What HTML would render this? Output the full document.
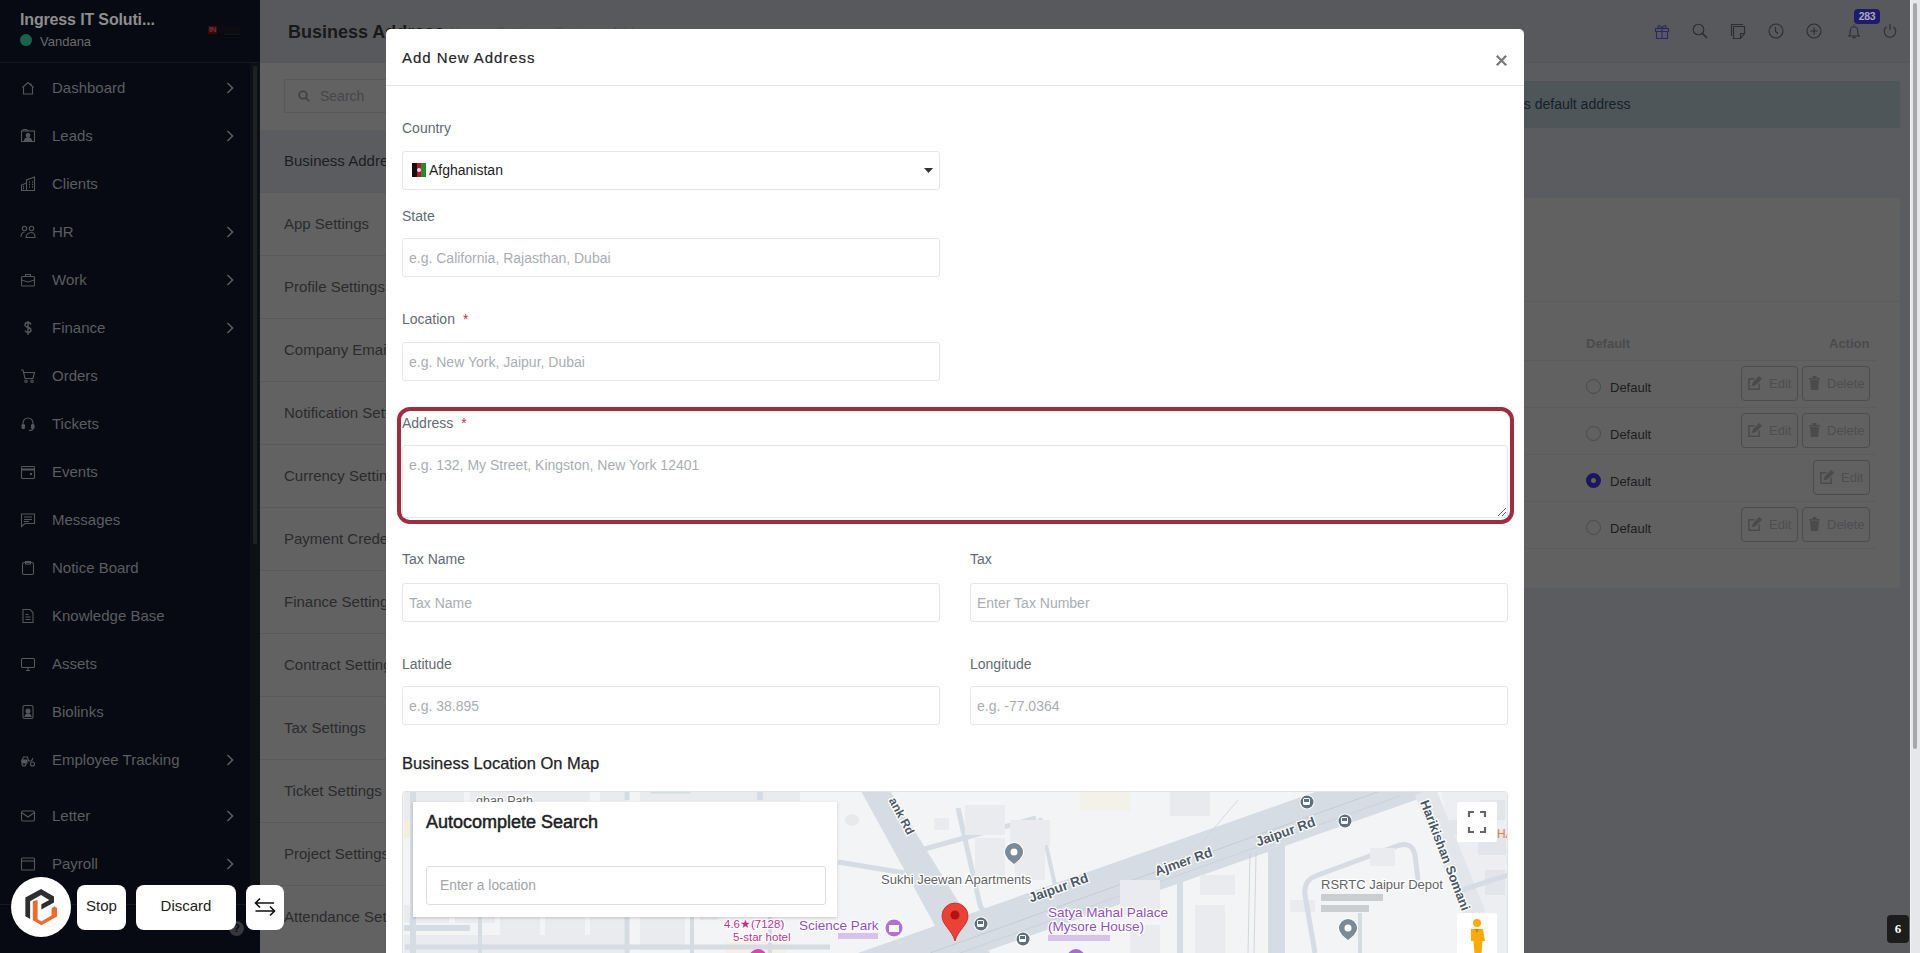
<!DOCTYPE html>
<html><head><meta charset="utf-8">
<style>
*{box-sizing:border-box;margin:0;padding:0}
html,body{width:1920px;height:953px;overflow:hidden;font-family:"Liberation Sans",sans-serif;background:#5b5c60;position:relative}
.abs{position:absolute}
#sb{position:absolute;left:0;top:0;width:260px;height:953px;background:#070a12;overflow:hidden}
#sb .hd{position:absolute;left:0;top:0;width:260px;height:63px;border-bottom:1px solid #15181e}
.mi{position:absolute;left:0;width:250px;height:48px;line-height:48px;font-size:15px;color:#5b5d61;white-space:nowrap}
.mi span{position:absolute;left:52px;top:0}
.mi svg.ic{position:absolute;left:20px;top:16px;width:16px;height:16px;fill:none;stroke:#55575b;stroke-width:1.1}
.mi svg.ch{position:absolute;left:226px;top:18px;width:8px;height:12px;fill:none;stroke:#5b5d61;stroke-width:1.6}
#main{position:absolute;left:260px;top:0;width:1650px;height:953px;background:#5b5c60;overflow:hidden}
#top{position:absolute;left:0;top:0;width:1650px;height:63px;background:#58595d;border-bottom:1px solid #55565a}
.smi{position:absolute;left:0;width:300px;height:63px;line-height:62px;font-size:15px;color:#2b2b2c;padding-left:24px;border-bottom:1px solid #5a5a5b;white-space:nowrap}
.hic{position:absolute;top:23px;width:16px;height:16px;fill:none;stroke:#2e2f33;stroke-width:1.1}
#modal{position:absolute;left:386px;top:29px;width:1138px;height:940px;background:#fff;border-radius:5px;overflow:hidden}
.lbl{position:absolute;font-size:14px;color:#636a73;white-space:nowrap;line-height:16px}
.inp{position:absolute;height:38px;border:1px solid #e4e6eb;border-radius:3px;background:#fff;font-size:14px;color:#a9adb3;line-height:38px;padding-left:6px;white-space:nowrap}
.req{color:#d52a3e;margin-left:8px}
.btn{position:absolute;height:35px;border:1px solid #4b4c4e;border-radius:4px;font-size:13px;color:#4d4e50;line-height:33px;white-space:nowrap}
.radio{position:absolute;left:1326px;width:15px;height:15px;border-radius:50%;border:1px solid #4a4b4d}
.dl{position:absolute;left:1350px;font-size:13px;color:#1d1d1e;line-height:15px}
.fb{position:absolute;top:885px;height:45px;background:#fff;border-radius:8px;font-size:15px;color:#222;line-height:42px;text-align:center}
</style></head><body>
<div id="sb">
<div class="hd">
<div class="abs" style="left:20px;top:11px;font-size:16px;font-weight:700;color:#8e8e8e;letter-spacing:-0.15px;line-height:18px">Ingress IT Soluti...</div>
<div class="abs" style="left:20px;top:34px;width:12px;height:12px;border-radius:50%;background:#14654f"></div>
<div class="abs" style="left:40px;top:34px;font-size:13px;color:#6a6b6d;line-height:15px">Vandana</div>
<div class="abs" style="left:208px;top:26px;width:9px;height:8px;background:#3a070a;color:#7a3030;font-size:8px;font-weight:700;line-height:8px;letter-spacing:-0.5px;padding-left:1px">IN</div>
<div class="abs" style="left:218px;top:26px;width:22px;height:7px;background:#0b0c12"></div>
<div class="abs" style="left:224px;top:34px;width:16px;height:1px;background:#101119"></div>
</div>
<div class="abs" style="left:250px;top:63px;width:10px;height:841px;background:#0d1015"></div>
<div class="abs" style="left:253px;top:66px;width:4px;height:478px;border-radius:1px;background:#1f2024"></div>
<div class="mi" style="top:64px"><svg class="ic" viewBox="0 0 16 16"><path d="M2.5 7.5L8 2.5l5.5 5"/><path d="M3.5 6.5V14h9V6.5"/><path d="M11 3.5v2"/></svg><span>Dashboard</span><svg class="ch" viewBox="0 0 8 12"><path d="M1.5 1l5 5-5 5"/></svg></div>
<div class="mi" style="top:112px"><svg class="ic" viewBox="0 0 16 16"><rect x="1.5" y="3" width="13" height="10.5"/><path d="M1.5 3l2-1.5h3L8 3"/><circle cx="8" cy="7.3" r="1.8" fill="#55575b"/><path d="M4.5 12.5c.5-2 2-2.8 3.5-2.8s3 .8 3.5 2.8z" fill="#55575b"/></svg><span>Leads</span><svg class="ch" viewBox="0 0 8 12"><path d="M1.5 1l5 5-5 5"/></svg></div>
<div class="mi" style="top:160px"><svg class="ic" viewBox="0 0 16 16"><path d="M1.5 14.5V9l5-2v7.5M6.5 14.5V4l8-3v13.5M1 14.5h14"/><path d="M3 10.5h1M3 12.5h1M9 6h1M12 6h1M9 8.5h1M12 8.5h1M9 11h1M12 11h1" stroke-width="1.3"/></svg><span>Clients</span></div>
<div class="mi" style="top:208px"><svg class="ic" viewBox="0 0 16 16"><circle cx="4.5" cy="4.5" r="2.2"/><circle cx="11.5" cy="4.5" r="2.2"/><path d="M1 13c0-3 1.5-5 3.5-5M6 13.5c0-3 2.5-5 5.5-5s3.5 2 3.5 5z"/></svg><span>HR</span><svg class="ch" viewBox="0 0 8 12"><path d="M1.5 1l5 5-5 5"/></svg></div>
<div class="mi" style="top:256px"><svg class="ic" viewBox="0 0 16 16"><rect x="1.5" y="4.5" width="13" height="9.5" rx="1"/><path d="M5.5 4.5v-2h5v2M1.5 8l6.5 2 6.5-2"/></svg><span>Work</span><svg class="ch" viewBox="0 0 8 12"><path d="M1.5 1l5 5-5 5"/></svg></div>
<div class="mi" style="top:304px"><svg class="ic" viewBox="0 0 16 16"><path d="M11 4.5c-.5-1.2-1.7-2-3-2-1.7 0-3 1-3 2.5s1.3 2 3 2.5 3 1 3 2.5-1.3 2.5-3 2.5c-1.4 0-2.6-.8-3-2M8 1v14" stroke-width="1.4"/></svg><span>Finance</span><svg class="ch" viewBox="0 0 8 12"><path d="M1.5 1l5 5-5 5"/></svg></div>
<div class="mi" style="top:352px"><svg class="ic" viewBox="0 0 16 16"><path d="M1 2h2l2 8.5h8l1.5-6H4"/><circle cx="6" cy="13.2" r="1.2"/><circle cx="12" cy="13.2" r="1.2"/></svg><span>Orders</span></div>
<div class="mi" style="top:400px"><svg class="ic" viewBox="0 0 16 16"><path d="M3 9V7a5 5 0 0 1 10 0v2"/><rect x="2" y="8.5" width="2.5" height="4" rx="1" fill="#55575b"/><rect x="11.5" y="8.5" width="2.5" height="4" rx="1" fill="#55575b"/><path d="M13 12.5c0 1.5-2 2-4 2"/></svg><span>Tickets</span></div>
<div class="mi" style="top:448px"><svg class="ic" viewBox="0 0 16 16"><rect x="1.5" y="2.5" width="13" height="12" rx="1"/><path d="M1.5 5.5h13" stroke-width="2"/><rect x="10" y="9" width="2" height="2" fill="#55575b" stroke="none"/></svg><span>Events</span></div>
<div class="mi" style="top:496px"><svg class="ic" viewBox="0 0 16 16"><path d="M1.5 2h13v9.5H5L1.5 14.5z"/><path d="M4 5h8M4 7.5h8M4 9.5h5"/></svg><span>Messages</span></div>
<div class="mi" style="top:544px"><svg class="ic" viewBox="0 0 16 16"><rect x="2.5" y="2.5" width="11" height="12" rx="1.5"/><path d="M5.5 1.5h5v2.5h-5z"/></svg><span>Notice Board</span></div>
<div class="mi" style="top:592px"><svg class="ic" viewBox="0 0 16 16"><path d="M3 1.5h7l3 3v10H3z"/><path d="M5.5 6.5h3M5.5 9h5M5.5 11.5h5"/></svg><span>Knowledge Base</span></div>
<div class="mi" style="top:640px"><svg class="ic" viewBox="0 0 16 16"><rect x="1.5" y="2.5" width="13" height="9" rx="1"/><path d="M6 14.5h4M8 11.5v3"/></svg><span>Assets</span></div>
<div class="mi" style="top:688px"><svg class="ic" viewBox="0 0 16 16"><rect x="3" y="1.5" width="10" height="13" rx="1.5"/><circle cx="8" cy="7" r="2" fill="#55575b"/><path d="M5 12.5c.5-2 1.5-2.5 3-2.5s2.5.5 3 2.5z" fill="#55575b"/></svg><span>Biolinks</span></div>
<div class="mi" style="top:736px"><svg class="ic" viewBox="0 0 16 16"><circle cx="4" cy="12" r="2"/><circle cx="12.5" cy="12" r="2"/><path d="M1.5 10l2-5h4l1 4h3l1.5-3" /><path d="M2 8h5v3H2z" fill="#55575b"/></svg><span>Employee Tracking</span><svg class="ch" viewBox="0 0 8 12"><path d="M1.5 1l5 5-5 5"/></svg></div>
<div class="mi" style="top:792px"><svg class="ic" viewBox="0 0 16 16"><rect x="1.5" y="3" width="13" height="10" rx="1.5"/><path d="M1.5 4.5L8 9l6.5-4.5"/></svg><span>Letter</span><svg class="ch" viewBox="0 0 8 12"><path d="M1.5 1l5 5-5 5"/></svg></div>
<div class="mi" style="top:840px"><svg class="ic" viewBox="0 0 16 16"><rect x="1.5" y="2" width="13" height="12" rx="1"/><path d="M1.5 5h13"/></svg><span>Payroll</span><svg class="ch" viewBox="0 0 8 12"><path d="M1.5 1l5 5-5 5"/></svg></div>
<div class="abs" style="left:0;top:904px;width:250px;height:1px;background:#15181e"></div>
<svg class="abs" style="left:17px;top:920px;width:8px;height:12px" viewBox="0 0 8 12" fill="none" stroke="#3c3e42" stroke-width="1.6"><path d="M6.5 1l-5 5 5 5"/></svg>
<div class="abs" style="left:229px;top:921px;width:15px;height:15px;border-radius:50%;background:#35373b;color:#070a11;font-size:11px;font-weight:700;text-align:center;line-height:15px">?</div>
</div>
<div id="main">
<div id="top">
<div class="abs" style="left:28px;top:22px;font-size:18px;font-weight:700;color:#19191a;line-height:21px;white-space:nowrap">Business Address</div>
<div class="abs" style="left:190px;top:24px;font-size:13px;color:#4e4f53;line-height:15px;white-space:nowrap">Home &bull; Settings &bull; Business Address</div>
<svg class="hic" style="left:1394px;stroke:#2a2766" viewBox="0 0 16 16"><path d="M1.5 5.5h13v3h-13zM2.5 8.5v7h11v-7M8 5.5v10"/><path d="M8 5.5C6.5 2 3.5 1.5 4 4.2 4.3 5.3 6.5 5.5 8 5.5zM8 5.5c1.5-3.5 4.5-4 4-1.3-.3 1.1-2.5 1.3-4 1.3z"/></svg>
<svg class="hic" style="left:1432px;stroke:#2c2d31" viewBox="0 0 16 16"><circle cx="6.5" cy="6.5" r="5.3"/><path d="M10.4 10.4L15 15" stroke-width="1.6"/></svg>
<svg class="hic" style="left:1470px;stroke:#2c2d31" viewBox="0 0 16 16"><path d="M3.5 3.5h11v7l-4 5h-7z"/><path d="M1.5 13V1.5H13M10.5 15.5v-5h4"/></svg>
<svg class="hic" style="left:1508px;stroke:#2c2d31" viewBox="0 0 16 16"><circle cx="8" cy="8" r="7"/><path d="M7.5 4v4.5l2.5 2"/></svg>
<svg class="hic" style="left:1546px;stroke:#2c2d31" viewBox="0 0 16 16"><circle cx="8" cy="8" r="7"/><path d="M8 4.5v7M4.5 8h7"/></svg>
<svg class="hic" style="left:1586px;stroke:#2c2d31" viewBox="0 0 16 16"><path d="M2 13h12M3.3 13c1-1.5 1-3 1-5.5a3.7 3.7 0 0 1 7.4 0c0 2.5 0 4 1 5.5M6.5 14.6h3"/><path d="M8 1.5v1"/></svg>
<svg class="hic" style="left:1622px;stroke:#2c2d31" viewBox="0 0 16 16"><path d="M8 1v6"/><path d="M4.5 3.8a5.8 5.8 0 1 0 7 0"/></svg>
<div class="abs" style="left:1594px;top:9px;width:26px;height:15px;border-radius:4px;background:#1e1b6c;color:#a9a8c0;font-size:10.5px;font-weight:700;text-align:center;line-height:15px;letter-spacing:-0.3px">283</div>
</div>
<div class="abs" style="left:0;top:63px;width:300px;height:890px;background:#626263"></div>
<div class="abs" style="left:24px;top:79px;width:260px;height:34px;border:1px solid #59595a;border-radius:1px"></div>
<svg class="abs" style="left:38px;top:90px;width:12px;height:12px" viewBox="0 0 12 12" fill="none" stroke="#3e3f41" stroke-width="1.6"><circle cx="5" cy="5" r="3.8"/><path d="M8 8l3.2 3.2"/></svg>
<div class="abs" style="left:60px;top:88px;font-size:14px;color:#454649;line-height:16px">Search</div>
<div class="smi" style="top:130px;background:#5b5c60;color:#1b1d22;">Business Address</div>
<div class="smi" style="top:193px;">App Settings</div>
<div class="smi" style="top:256px;">Profile Settings</div>
<div class="smi" style="top:319px;">Company Email</div>
<div class="smi" style="top:382px;">Notification Settings</div>
<div class="smi" style="top:445px;">Currency Settings</div>
<div class="smi" style="top:508px;">Payment Credentials</div>
<div class="smi" style="top:571px;">Finance Settings</div>
<div class="smi" style="top:634px;">Contract Settings</div>
<div class="smi" style="top:697px;">Tax Settings</div>
<div class="smi" style="top:760px;">Ticket Settings</div>
<div class="smi" style="top:823px;">Project Settings</div>
<div class="smi" style="top:886px;border-bottom:none;">Attendance Settings</div>
<div class="abs" style="left:310px;top:81px;width:1330px;height:47px;background:#4f5659;border-radius:3px"></div>
<div class="abs" style="left:1063px;top:96px;font-size:14px;color:#13212a;line-height:16px;white-space:nowrap">Click on the radio button to set as default address</div>
<div class="abs" style="left:310px;top:198px;width:1330px;height:390px;background:#616162;border-radius:3px"></div>
<div class="abs" style="left:310px;top:301px;width:1330px;height:1px;background:#5b5b5c"></div>
<div class="abs" style="left:1326px;top:336px;font-size:13px;font-weight:700;color:#4a4b4d;line-height:15px">Default</div>
<div class="abs" style="left:1569px;top:336px;font-size:13px;font-weight:700;color:#4a4b4d;line-height:15px">Action</div>
<div class="abs" style="left:330px;top:360px;width:1286px;height:1px;background:#5b5b5c"></div>
<div class="abs" style="left:330px;top:407px;width:1286px;height:1px;background:#5b5b5c"></div>
<div class="abs" style="left:330px;top:454px;width:1286px;height:1px;background:#5b5b5c"></div>
<div class="abs" style="left:330px;top:501px;width:1286px;height:1px;background:#5b5b5c"></div>
<div class="abs" style="left:330px;top:548px;width:1286px;height:1px;background:#5b5b5c"></div>
<div class="radio" style="top:379px;"></div>
<div class="dl" style="top:380px">Default</div>
<div class="btn" style="left:1481px;top:366px;width:57px"><svg style="position:absolute;left:5px;top:9px;width:15px;height:15px" viewBox="0 0 16 16" fill="none" stroke="#4a4b4d" stroke-width="1.6"><path d="M8 3H2v11h11V8"/><path d="M6 10l1-3 6-6 2 2-6 6z" fill="#4a4b4d"/></svg><span style="position:absolute;left:27px">Edit</span></div>
<div class="btn" style="left:1542px;top:366px;width:68px"><svg style="position:absolute;left:6px;top:9px;width:11px;height:14px" viewBox="0 0 11 14"><path d="M0 2h11v1.5H0zM3.5 0h4v2h-4zM1 4h9l-.8 10H1.8z" fill="#4a4b4d"/></svg><span style="position:absolute;left:24px">Delete</span></div>
<div class="radio" style="top:426px;"></div>
<div class="dl" style="top:427px">Default</div>
<div class="btn" style="left:1481px;top:413px;width:57px"><svg style="position:absolute;left:5px;top:9px;width:15px;height:15px" viewBox="0 0 16 16" fill="none" stroke="#4a4b4d" stroke-width="1.6"><path d="M8 3H2v11h11V8"/><path d="M6 10l1-3 6-6 2 2-6 6z" fill="#4a4b4d"/></svg><span style="position:absolute;left:27px">Edit</span></div>
<div class="btn" style="left:1542px;top:413px;width:68px"><svg style="position:absolute;left:6px;top:9px;width:11px;height:14px" viewBox="0 0 11 14"><path d="M0 2h11v1.5H0zM3.5 0h4v2h-4zM1 4h9l-.8 10H1.8z" fill="#4a4b4d"/></svg><span style="position:absolute;left:24px">Delete</span></div>
<div class="radio" style="top:473px;background:#1a175f;border:4px solid #1a175f;"></div>
<div class="abs" style="left:1331px;top:478px;width:5px;height:5px;border-radius:50%;background:#636363"></div>
<div class="dl" style="top:474px">Default</div>
<div class="btn" style="left:1553px;top:460px;width:57px"><svg style="position:absolute;left:5px;top:9px;width:15px;height:15px" viewBox="0 0 16 16" fill="none" stroke="#4a4b4d" stroke-width="1.6"><path d="M8 3H2v11h11V8"/><path d="M6 10l1-3 6-6 2 2-6 6z" fill="#4a4b4d"/></svg><span style="position:absolute;left:27px">Edit</span></div>
<div class="radio" style="top:520px;"></div>
<div class="dl" style="top:521px">Default</div>
<div class="btn" style="left:1481px;top:507px;width:57px"><svg style="position:absolute;left:5px;top:9px;width:15px;height:15px" viewBox="0 0 16 16" fill="none" stroke="#4a4b4d" stroke-width="1.6"><path d="M8 3H2v11h11V8"/><path d="M6 10l1-3 6-6 2 2-6 6z" fill="#4a4b4d"/></svg><span style="position:absolute;left:27px">Edit</span></div>
<div class="btn" style="left:1542px;top:507px;width:68px"><svg style="position:absolute;left:6px;top:9px;width:11px;height:14px" viewBox="0 0 11 14"><path d="M0 2h11v1.5H0zM3.5 0h4v2h-4zM1 4h9l-.8 10H1.8z" fill="#4a4b4d"/></svg><span style="position:absolute;left:24px">Delete</span></div>
</div>
<div class="abs" style="left:1910px;top:0;width:10px;height:953px;background:#e5e7eb;border-left:1px solid #f3f4f6"></div>
<div class="abs" style="left:1913px;top:3px;width:4px;height:746px;border-radius:2px;background:#a6a7a9"></div>
<div id="modal">
<div class="abs" style="left:16.0px;top:19.8px;font-size:15px;line-height:18px;white-space:nowrap;color:#25262a;letter-spacing:0.95px;-webkit-text-stroke:0.2px #25262a">Add New Address</div>
<svg class="abs" style="left:1109px;top:25px;width:13px;height:13px" viewBox="0 0 13 13" stroke="#787879" stroke-width="2.3"><path d="M1.8 1.8l9.4 9.4M11.2 1.8l-9.4 9.4"/></svg>
<div class="abs" style="left:0;top:56px;width:1138px;height:1px;background:#e3e4e6"></div>
<div class="abs" style="left:16.0px;top:90.5px;font-size:14px;line-height:17px;white-space:nowrap;color:#636a73">Country</div>
<div class="inp" style="left:16px;top:122px;width:538px;height:39px;color:#212225;padding-left:0"><div class="abs" style="left:9px;top:11px;width:14px;height:14px;background:linear-gradient(90deg,#111 0 33%,#c8102e 33% 66%,#1e8f2a 66%)"></div><div class="abs" style="left:14px;top:16px;width:4px;height:4px;border-radius:50%;background:#f3d5d5"></div><span class="abs" style="left:26px;top:0;line-height:37px">Afghanistan</span><svg class="abs" style="left:521px;top:16px;width:9px;height:5px" viewBox="0 0 9 5"><path d="M0 0h9L4.5 5z" fill="#333"/></svg></div>
<div class="abs" style="left:16.0px;top:178.9px;font-size:14px;line-height:17px;white-space:nowrap;color:#636a73">State</div>
<div class="inp" style="left:16px;top:209px;width:538px;height:39px;">e.g. California, Rajasthan, Dubai</div>
<div class="abs" style="left:16.0px;top:281.5px;font-size:14px;line-height:17px;white-space:nowrap;color:#636a73">Location<span class="req">*</span></div>
<div class="inp" style="left:16px;top:313px;width:538px;height:39px;">e.g. New York, Jaipur, Dubai</div>
<div class="abs" style="left:11px;top:378px;width:1117px;height:117px;border:4px solid #a42a41;border-radius:13px"></div>
<div class="abs" style="left:16.0px;top:386.4px;font-size:14px;line-height:17px;white-space:nowrap;color:#636a73">Address<span class="req">*</span></div>
<div class="inp" style="left:16px;top:416px;width:1106px;height:73px;line-height:16px;padding-top:11px;padding-left:6px">e.g. 132, My Street, Kingston, New York 12401<svg class="abs" style="left:1095px;top:62px;width:8px;height:8px" viewBox="0 0 8 8" stroke="#555" stroke-width="0.9"><path d="M0 8L8 0M4 8L8 4"/></svg></div>
<div class="abs" style="left:16.0px;top:521.9px;font-size:14px;line-height:17px;white-space:nowrap;color:#636a73">Tax Name</div>
<div class="inp" style="left:16px;top:554px;width:538px;height:39px;">Tax Name</div>
<div class="abs" style="left:584.0px;top:521.9px;font-size:14px;line-height:17px;white-space:nowrap;color:#636a73">Tax</div>
<div class="inp" style="left:584px;top:554px;width:538px;height:39px;">Enter Tax Number</div>
<div class="abs" style="left:16.0px;top:626.9px;font-size:14px;line-height:17px;white-space:nowrap;color:#636a73">Latitude</div>
<div class="inp" style="left:16px;top:657px;width:538px;height:39px;">e.g. 38.895</div>
<div class="abs" style="left:584.0px;top:626.9px;font-size:14px;line-height:17px;white-space:nowrap;color:#636a73">Longitude</div>
<div class="inp" style="left:584px;top:657px;width:538px;height:39px;">e.g. -77.0364</div>
<div class="abs" style="left:16.0px;top:723.9px;font-size:16.5px;line-height:20px;white-space:nowrap;color:#232426;letter-spacing:0px;-webkit-text-stroke:0.25px #232426">Business Location On Map</div>
<div class="abs" style="left:16px;top:762px;width:1106px;height:200px;border:1px solid #dfe1e4;border-radius:4px;overflow:hidden;background:#f3f4f5">
<svg class="abs" style="left:-1px;top:-1px" width="1106" height="200" viewBox="402 791 1106 200" font-family="Liberation Sans, sans-serif">
<rect x="402" y="791" width="1106" height="200" fill="#f3f4f5"/>
<rect x="404" y="791" width="60" height="40" fill="#e9ebee"/>
<rect x="470" y="791" width="120" height="10" fill="#e9ebee"/>
<rect x="600" y="791" width="28" height="10" fill="#e9ebee"/>
<rect x="640" y="791" width="160" height="10" fill="#e9ebee"/>
<rect x="404" y="905" width="45" height="18" fill="#e9ebee"/>
<rect x="455" y="905" width="40" height="18" fill="#e9ebee"/>
<rect x="500" y="905" width="40" height="45" fill="#e9ebee"/>
<rect x="545" y="910" width="40" height="40" fill="#e9ebee"/>
<rect x="590" y="905" width="35" height="45" fill="#e9ebee"/>
<rect x="640" y="915" width="45" height="35" fill="#e9ebee"/>
<rect x="700" y="905" width="18" height="15" fill="#e9ebee"/>
<rect x="404" y="935" width="220" height="20" fill="#e9ebee"/>
<rect x="404" y="820" width="8" height="18" fill="#f3efd9"/>
<rect x="726" y="942" width="60" height="11" fill="#f4f1e4"/>
<path d="M404 928 H470" stroke="#d5dce4" stroke-width="6"/>
<path d="M413 791 V953" stroke="#d5dce4" stroke-width="6"/>
<path d="M405 947 H830" stroke="#d5dce4" stroke-width="5"/>
<path d="M480 900 V953" stroke="#d5dce4" stroke-width="4"/>
<path d="M627 791 V800 M627 900 V953" stroke="#d5dce4" stroke-width="5"/>
<path d="M692 905 V953" stroke="#d5dce4" stroke-width="4"/>
<path d="M770 915 V953" stroke="#d5dce4" stroke-width="4"/>
<path d="M650 791 H690" stroke="#d5dce4" stroke-width="5"/>
<path d="M760 791 V800" stroke="#d5dce4" stroke-width="6"/>
<path d="M838 862 L905 873" stroke="#d5dce4" stroke-width="5"/>
<path d="M921 850 L1036 818" stroke="#d5dce4" stroke-width="5"/>
<path d="M958 808 L980 905 Q982 912 990 911 L1050 900" fill="none" stroke="#d5dce4" stroke-width="5"/>
<path d="M1040 818 L1055 885" stroke="#d5dce4" stroke-width="4"/>
<path d="M975 855 L1048 840" stroke="#d5dce4" stroke-width="4"/>
<rect x="965" y="805" width="40" height="30" fill="#e9ebee" />
<rect x="1010" y="820" width="40" height="25" fill="#e9ebee" />
<rect x="975" y="838" width="30" height="40" fill="#e9ebee" />
<rect x="1015" y="845" width="30" height="35" fill="#e9ebee" />
<rect x="934" y="818" width="15" height="12" fill="#e9ebee" />
<ellipse cx="852" cy="820" rx="7" ry="6" fill="#e7e9ec"/>
<path d="M861 791 L890 791 L990 953 L950 953 Z" fill="#d5dce4"/>
<path d="M858 953 L1318 791 L1441 791 L981 953 Z" fill="#d5dce4"/>
<path d="M930 953 L1380 791" stroke="#bfc8d2" stroke-width="0.8"/>
<path d="M960 953 L1400 796" stroke="#c3cbd5" stroke-width="0.6"/>
<path d="M1441 791 L1508 791 L1508 953 L1470 953 Z" fill="#eceef1"/>
<rect x="1480" y="800" width="25" height="20" fill="#e2e5ea"/>
<rect x="1478" y="830" width="28" height="25" fill="#e2e5ea"/>
<rect x="1485" y="870" width="20" height="25" fill="#e2e5ea"/>
<rect x="1450" y="820" width="18" height="15" fill="#e2e5ea"/>
<path d="M1425 791 L1475 915" stroke="#e2e5ea" stroke-width="22"/>
<path d="M1462 890 L1508 875" stroke="#d5dce4" stroke-width="5"/>
<rect x="1268" y="843" width="17" height="110" fill="#d5dce4"/>
<path d="M1250 853 L1248 953 M1256 853 L1254 953" stroke="#c8ced6" stroke-width="0.8"/>
<path d="M1170 880 L1238 800" stroke="#cfd5dc" stroke-width="0.8"/>
<path d="M1180 880 V953" stroke="#d5dce4" stroke-width="6"/>
<rect x="1120" y="880" width="40" height="35" fill="#e9ebee"/>
<rect x="1130" y="925" width="30" height="28" fill="#e9ebee"/>
<rect x="1200" y="875" width="35" height="20" fill="#e9ebee"/>
<rect x="1195" y="905" width="30" height="48" fill="#e9ebee"/>
<rect x="1290" y="900" width="25" height="12" fill="#e9ebee"/>
<rect x="1170" y="791" width="40" height="25" fill="#e8eaed"/>
<rect x="1080" y="791" width="50" height="20" fill="#f4f0e0" opacity="0.6"/>
<path d="M1315 953 L1305 895 Q1303 880 1318 875 L1400 845 Q1412 842 1415 855 L1418 880" fill="none" stroke="#d5dce4" stroke-width="5"/>
<path d="M1360 913 V953" stroke="#d5dce4" stroke-width="4"/>
<rect x="1370" y="848" width="25" height="18" fill="#e9ebee"/>
<text x="476" y="805" font-size="12.5" fill="#5f6368" text-anchor="start" font-weight="normal" stroke="#fff" stroke-width="2.5" paint-order="stroke">ghan Path</text>
<text x="881" y="884" font-size="13" fill="#5f6368" text-anchor="start" font-weight="normal" stroke="#fff" stroke-width="2.5" paint-order="stroke">Sukhi Jeewan Apartments</text>
<text x="1060" y="892" font-size="13.5" fill="#4c5866" text-anchor="middle" font-weight="bold" stroke="#fff" stroke-width="2.5" paint-order="stroke" transform="rotate(-19.5 1060 892)">Jaipur Rd</text>
<text x="1185" y="866" font-size="13.5" fill="#4c5866" text-anchor="middle" font-weight="bold" stroke="#fff" stroke-width="2.5" paint-order="stroke" transform="rotate(-19.5 1185 866)">Ajmer Rd</text>
<text x="1287" y="836" font-size="13.5" fill="#4c5866" text-anchor="middle" font-weight="bold" stroke="#fff" stroke-width="2.5" paint-order="stroke" transform="rotate(-19.5 1287 836)">Jaipur Rd</text>
<text x="898" y="818" font-size="12" fill="#4c5866" text-anchor="middle" font-weight="bold" stroke="#fff" stroke-width="2.5" paint-order="stroke" transform="rotate(62 898 818)">ank Rd</text>
<text x="1321" y="889" font-size="13" fill="#5f6368" text-anchor="start" font-weight="normal" stroke="#fff" stroke-width="2.5" paint-order="stroke">RSRTC Jaipur Depot</text>
<rect x="1321" y="894" width="62" height="7" fill="#b9bdc2" opacity="0.7"/><rect x="1321" y="905" width="48" height="7" fill="#b9bdc2" opacity="0.7"/>
<text x="1441" y="857" font-size="13" fill="#4c5866" text-anchor="middle" font-weight="bold" stroke="#fff" stroke-width="2.5" paint-order="stroke" transform="rotate(69 1441 857)">Harikishan Somani</text>
<text x="1048" y="917" font-size="13.5" fill="#8e4fc4" text-anchor="start" font-weight="normal" stroke="#fff" stroke-width="2.5" paint-order="stroke">Satya Mahal Palace</text>
<text x="1048" y="931" font-size="13.5" fill="#8e4fc4" text-anchor="start" font-weight="normal" stroke="#fff" stroke-width="2.5" paint-order="stroke">(Mysore House)</text>
<rect x="1048" y="935" width="62" height="6" fill="#d6c3ea"/>
<text x="799" y="930" font-size="13.5" fill="#8e4fc4" text-anchor="start" font-weight="normal" stroke="#fff" stroke-width="2.5" paint-order="stroke">Science Park</text>
<rect x="838" y="933" width="40" height="6" fill="#d6c3ea"/>
<text x="724" y="928" font-size="11.5" fill="#c2308f" text-anchor="start" font-weight="normal" stroke="#fff" stroke-width="2.5" paint-order="stroke">4.6&#9733;(7128)</text>
<text x="733" y="941" font-size="11.5" fill="#c2308f" text-anchor="start" font-weight="normal" stroke="#fff" stroke-width="2.5" paint-order="stroke">5-star hotel</text>
<text x="1497" y="838" font-size="12" fill="#e0803a">HA</text>
<circle cx="1014" cy="852" r="10" fill="#fff"/><circle cx="1014" cy="852" r="9" fill="#7b8a97"/><path d="M1014 864 l-6 -5 h12 z" fill="#7b8a97"/><circle cx="1014" cy="852" r="3.5" fill="#fff"/>
<circle cx="1348" cy="928" r="10" fill="#fff"/><circle cx="1348" cy="928" r="9" fill="#7b8a97"/><path d="M1348 940 l-6 -5 h12 z" fill="#7b8a97"/><circle cx="1348" cy="928" r="3.5" fill="#fff"/>
<circle cx="894" cy="928" r="10" fill="#fff"/><circle cx="894" cy="928" r="8.5" fill="#b06ee0"/><rect x="889" y="925" width="10" height="7" fill="#fff"/>
<circle cx="758" cy="958" r="9" fill="#e23dbb"/>
<circle cx="1076" cy="958" r="9" fill="#a66ae0"/>
<circle cx="981" cy="924" r="7.5" fill="#fff"/><circle cx="981" cy="924" r="6.5" fill="#5d7080"/><rect x="977" y="920" width="7" height="7" rx="1.5" fill="#fff"/><rect x="978" y="921" width="5" height="3" fill="#5d7080"/>
<circle cx="1023" cy="939" r="7.5" fill="#fff"/><circle cx="1023" cy="939" r="6.5" fill="#5d7080"/><rect x="1019" y="935" width="7" height="7" rx="1.5" fill="#fff"/><rect x="1020" y="936" width="5" height="3" fill="#5d7080"/>
<circle cx="1307" cy="802" r="7.5" fill="#fff"/><circle cx="1307" cy="802" r="6.5" fill="#5d7080"/><rect x="1303" y="798" width="7" height="7" rx="1.5" fill="#fff"/><rect x="1304" y="799" width="5" height="3" fill="#5d7080"/>
<circle cx="1345" cy="821" r="7.5" fill="#fff"/><circle cx="1345" cy="821" r="6.5" fill="#5d7080"/><rect x="1341" y="817" width="7" height="7" rx="1.5" fill="#fff"/><rect x="1342" y="818" width="5" height="3" fill="#5d7080"/>
<path d="M955 941 C952 930 942 925 942 916 A13 13 0 0 1 968 916 C968 925 958 930 955 941 Z" fill="#ea4335" stroke="#c5221f" stroke-width="0.8"/><circle cx="955" cy="915" r="4.5" fill="#b31412"/>
<rect x="1457" y="802" width="40" height="40" rx="2" fill="#fff"/>
<path d="M1469 817 v-5 h5 M1480 812 h5 v5 M1485 827 v5 h-5 M1474 832 h-5 v-5" fill="none" stroke="#666" stroke-width="2.2"/>
<rect x="1457" y="913" width="40" height="60" rx="2" fill="#fff"/>
<circle cx="1477" cy="923" r="4" fill="#f9ab00"/><path d="M1471 929 h12 l2 12 h-2.5 l-1 12 h-7 l-1-12 h-2.5z" fill="#f9ab00"/><path d="M1475 929 l2 4 2-4z" fill="#e37400"/>
</svg>
<div class="abs" style="left:10px;top:10px;width:424px;height:115px;background:#fff;box-shadow:0 1px 3px rgba(0,0,0,0.18)">
<div class="abs" style="left:13px;top:10px;font-size:18px;font-weight:400;color:#202124;line-height:21px;white-space:nowrap;-webkit-text-stroke:0.5px #202124">Autocomplete Search</div>
<div class="abs" style="left:13px;top:64px;width:400px;height:39px;border:1px solid #dcdde0;border-radius:3px;font-size:13.8px;color:#a2a4a8;line-height:37px;padding-left:13px;white-space:nowrap">Enter a location</div>
</div>
</div>
</div>
<div class="abs" style="left:11px;top:877px;width:60px;height:60px;border-radius:50%;background:#fff;box-shadow:0 0 2px rgba(0,0,0,.3)">
<svg class="abs" style="left:-1px;top:-2px;width:65px;height:65px" viewBox="0 0 953 953">
<path d="M225 330 L455 205 L645 315 L645 405 L460 505 L460 430 L575 365 L455 295 L295 385 L295 645 L225 605 Z" fill="#2f2f31"/>
<path d="M335 385 L405 365 L405 650 L460 680 L610 595 L610 490 L650 460 L690 485 L690 610 L460 735 L335 665 Z" fill="#f4692a"/>
</svg></div>
<div class="fb" style="left:77px;width:49px">Stop</div>
<div class="fb" style="left:136px;width:100px">Discard</div>
<div class="fb" style="left:246px;width:38px"><svg class="abs" style="left:8px;top:11px;width:22px;height:22px" viewBox="0 0 22 22" fill="none" stroke="#111" stroke-width="1.6"><path d="M1.5 7h18.5M6 2.5L1.5 7 6 11.5M20.5 15H1.5M16 10.5l4.5 4.5-4.5 4.5"/></svg></div>
<div class="abs" style="left:1887px;top:915px;width:22px;height:28px;border-radius:4px;background:#1c1c1d;color:#fff;font-size:13px;font-weight:700;text-align:center;line-height:28px;font-family:'Liberation Serif',serif">6</div>
</body></html>
